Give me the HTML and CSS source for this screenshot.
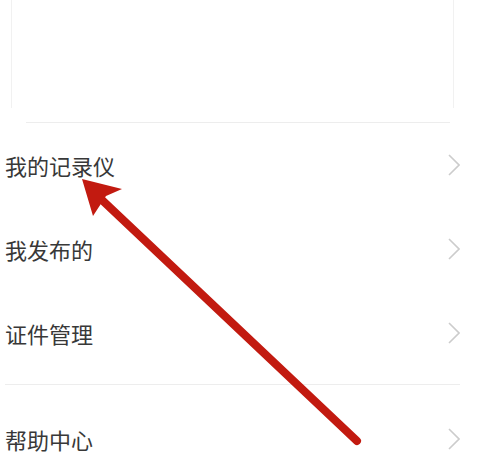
FILE: index.html
```html
<!DOCTYPE html>
<html lang="zh-CN">
<head>
<meta charset="utf-8">
<link rel="stylesheet" href="styles.css">
</head>
<body>
<div class="page">
  <div class="card"></div>
  <div class="sep sep-top"></div>
  <ul class="menu">
    <li class="row"><span class="label">我的记录仪</span><svg class="chev" viewBox="0 0 12 22"><path d="M1 1 L11 11 L1 21" /></svg></li>
    <li class="row"><span class="label">我发布的</span><svg class="chev" viewBox="0 0 12 22"><path d="M1 1 L11 11 L1 21" /></svg></li>
    <li class="row"><span class="label">证件管理</span><svg class="chev" viewBox="0 0 12 22"><path d="M1 1 L11 11 L1 21" /></svg></li>
  </ul>
  <div class="sep sep-mid"></div>
  <ul class="menu">
    <li class="row row-last"><span class="label">帮助中心</span><svg class="chev" viewBox="0 0 12 22"><path d="M1 1 L11 11 L1 21" /></svg></li>
  </ul>
  <svg class="annot" viewBox="0 0 477 469" width="477" height="469">
    <line x1="357" y1="441" x2="102" y2="200" class="shaft" />
    <polygon class="head" points="82,179 122,189 106,196 93,216" />
  </svg>
</div>
</body>
</html>
```

FILE: styles.css
```css
html, body {
  margin: 0;
  padding: 0;
  background: #ffffff;
}
.page {
  position: relative;
  width: 477px;
  height: 469px;
  overflow: hidden;
  font-family: "Noto Sans CJK SC", "Noto Sans", sans-serif;
  color: #383838;
}
.card {
  height: 108px;
  margin: 0 23px 0 11px;
  border-left: 1px solid #f1f1f1;
  border-right: 1px solid #f1f1f1;
}
.sep {
  height: 1px;
  background: #ededed;
}
.sep-top {
  margin: 14px 27px 0 26px;
}
.sep-mid {
  margin: 9px 17px 0 5px;
}
.menu {
  list-style: none;
  margin: 0;
  padding: 0;
}
.row {
  height: 84px;
  display: flex;
  align-items: center;
  justify-content: space-between;
  padding: 0 17px 0 5px;
}
.row-last {
  margin-top: 12px;
}
.label {
  font-size: 22px;
  line-height: 1;
}
.chev {
  width: 12px;
  height: 22px;
  fill: none;
  stroke: #cccccc;
  stroke-width: 1.6;
}
.annot {
  position: absolute;
  left: 0;
  top: 0;
  pointer-events: none;
}
.shaft {
  stroke: #c21a10;
  stroke-width: 8;
  stroke-linecap: round;
}
.head {
  fill: #c21a10;
}
```
